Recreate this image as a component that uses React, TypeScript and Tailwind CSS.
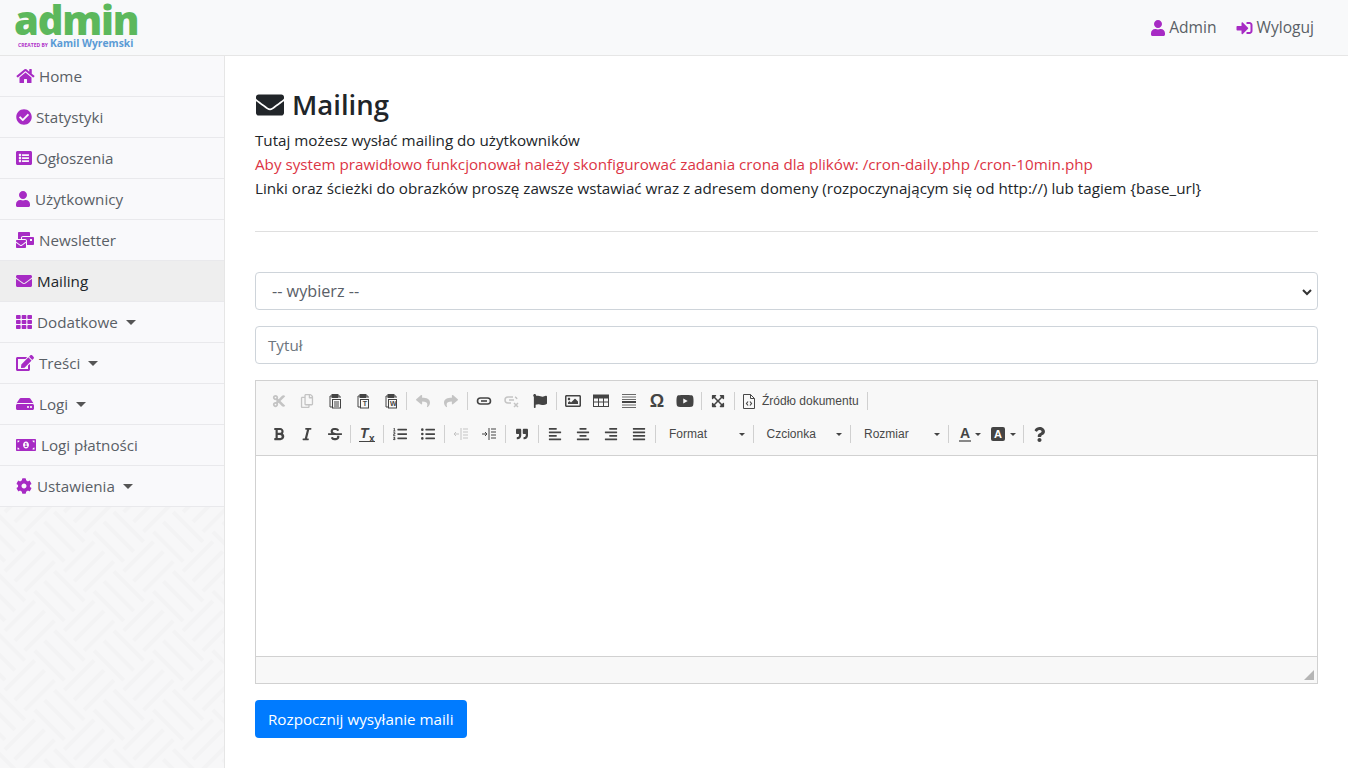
import type { ReactNode } from 'react';
import {
  FaHome, FaCheckCircle, FaListAlt, FaUser, FaMailBulk, FaEnvelope, FaTh, FaEdit, FaHdd,
  FaMoneyBillAlt, FaCog, FaSignInAlt, FaCut, FaRegCopy, FaReply, FaShare, FaFlag,
  FaRegImage, FaYoutube, FaExpandArrowsAlt, FaBold, FaItalic,
  FaStrikethrough, FaListOl, FaListUl, FaQuoteRight,
  FaAlignLeft, FaAlignCenter, FaAlignRight, FaAlignJustify, FaQuestion,
} from 'react-icons/fa';

const menu = [
  { label: 'Home', icon: <FaHome className="w-[19px] h-[16px]" />, gap: 'ml-[4px]' },
  { label: 'Statystyki', icon: <FaCheckCircle className="w-[16px] h-[16px]" />, gap: 'ml-[4px]' },
  { label: 'Ogłoszenia', icon: <FaListAlt className="w-[16px] h-[16px]" />, gap: 'ml-[4px]' },
  { label: 'Użytkownicy', icon: <FaUser className="w-[14px] h-[16px]" />, gap: 'ml-[5px]' },
  { label: 'Newsletter', icon: <FaMailBulk className="w-[18px] h-[16px]" />, gap: 'ml-[5px]' },
  { label: 'Mailing', icon: <FaEnvelope className="w-[16px] h-[16px]" />, gap: 'ml-[5px]', active: true },
  { label: 'Dodatkowe', icon: <FaTh className="w-[16px] h-[16px]" />, gap: 'ml-[5px]', caret: true },
  { label: 'Treści', icon: <FaEdit className="w-[18px] h-[16px]" />, gap: 'ml-[5px]', caret: true },
  { label: 'Logi', icon: <FaHdd className="w-[18px] h-[16px]" />, gap: 'ml-[5px]', caret: true },
  { label: 'Logi płatności', icon: <FaMoneyBillAlt className="w-[20px] h-[16px]" />, gap: 'ml-[5px]' },
  { label: 'Ustawienia', icon: <FaCog className="w-[16px] h-[16px]" />, gap: 'ml-[5px]', caret: true },
];

function Sep({ narrow }: { narrow?: boolean }) {
  return <span className={`w-px h-[18px] bg-[#d0d0d0] mr-[2px] ${narrow ? 'ml-[1px]' : 'ml-[2px]'}`} />;
}

function Tool({ children, off }: { children: ReactNode; off?: boolean }) {
  return (
    <span className={`w-[24px] h-[20px] mx-[2px] flex items-center justify-center text-[14px] ${off ? 'text-[#c4c4c4]' : 'text-[#444]'}`}>
      {children}
    </span>
  );
}

function Glyph({ children }: { children: ReactNode }) {
  return (
    <svg width="16" height="16" viewBox="0 0 16 16" fill="none" stroke="currentColor" strokeWidth="1" aria-hidden="true">
      {children}
    </svg>
  );
}

function PasteIcon({ mark }: { mark?: string }) {
  return (
    <span className="relative flex w-[16px] h-[16px] items-center justify-center">
      <Glyph>
        <path d="M5 3H3v11h2M11 3h2v2" />
        <rect x="5" y="1.5" width="6" height="3" fill="currentColor" />
        <rect x="5.5" y="6.5" width="8" height="8.5" />
        {!mark && <path d="M7 9h5M7 11h5M7 13h5" />}
      </Glyph>
      {mark && <span className="absolute left-[7px] top-[7px] w-[6px] text-center text-[7px] leading-[7px] font-bold font-['Liberation_Sans',sans-serif]">{mark}</span>}
    </span>
  );
}

function Combo({ label }: { label: string }) {
  return (
    <span className="w-[92.5px] h-[20px] pl-[11px] pr-[6px] flex items-center justify-between text-[12px] text-[#484848]">
      {label}
      <span className="border-x-[3px] border-x-transparent border-t-[3px] border-t-[#444]" />
    </span>
  );
}

export default function App() {
  return (
    <div className="min-h-[768px] bg-white text-[#212529] font-['Open_Sans','Noto_Sans',sans-serif] text-[15.2px] overflow-hidden">
      <header className="h-[56px] border-b border-[#e6e6e6] bg-[#f8f9fa] flex items-start pl-[14px] pr-[34px]">
        <div className="w-[125px] pt-[3px]">
          <div className="text-[40px] font-extrabold text-[#5cb85c] h-[34px] leading-[34px] tracking-[-1.2px]">admin</div>
          <div className="flex items-baseline gap-[2px] font-bold ml-[4px] h-[13px] leading-[13px]">
            <span className="text-[5px] text-[#b02fc9]">CREATED BY</span>
            <span className="text-[10.3px] text-[#5b9bd5]">Kamil Wyremski</span>
          </div>
        </div>
        <nav className="ml-auto h-[55px] pt-[1px] flex items-center gap-[19px] text-[15.6px] text-[#5a5f66]">
          <span className="flex items-center gap-[4px]"><FaUser className="w-[14px] h-[16px] text-[#a72bc4]" />Admin</span>
          <span className="flex items-center gap-[4px]"><FaSignInAlt className="w-[17px] h-[16px] text-[#a72bc4]" />Wyloguj</span>
        </nav>
      </header>
      <div className="flex h-[712px]">
        <aside className="w-[225px] border-r border-[#e6e6e6] bg-[#f7f7f8] flex flex-col">
          {menu.map(item => (
            <div
              key={item.label}
              className={`h-[41px] shrink-0 flex items-center pl-[16px] border-b border-[#e9e9ec] ${item.active ? 'bg-[#eeeeee] text-[#212529]' : 'bg-[#f9f9fb] text-[#5a5f66]'}`}
            >
              <span className="text-[#a72bc4] flex">{item.icon}</span>
              <span className={item.gap}>{item.label}</span>
              {item.caret && <span className="ml-[8px] border-x-[5px] border-x-transparent border-t-[5px] border-t-[#555]" />}
            </div>
          ))}
          <svg className="flex-1 w-full" aria-hidden="true">
            <defs>
              <pattern id="weave" width="84" height="84" patternUnits="userSpaceOnUse" patternTransform="rotate(45)">
                <path d="M0 7H42M0 21H42M0 35H42M42 49H84M42 63H84M42 77H84M49 0V42M63 0V42M77 0V42M7 42V84M21 42V84M35 42V84" fill="none" stroke="#f3f3f4" strokeWidth="4" />
              </pattern>
            </defs>
            <rect width="100%" height="100%" fill="url(#weave)" />
          </svg>
        </aside>
        <main className="flex-1 pl-[30px] pr-[30px]">
          <h2 className="flex items-center gap-[7px] mt-[28px] text-[27.5px] font-semibold leading-[42px]">
            <FaEnvelope className="w-[30px] h-[28px]" />Mailing
          </h2>
          <div className="mt-[2px] leading-[24px]">
            <p>Tutaj możesz wysłać mailing do użytkowników</p>
            <p className="text-[#dc3545]">Aby system prawidłowo funkcjonował należy skonfigurować zadania crona dla plików: /cron-daily.php /cron-10min.php</p>
            <p>Linki oraz ścieżki do obrazków proszę zawsze wstawiać wraz z adresem domeny (rozpoczynającym się od http://) lub tagiem {'{base_url}'}</p>
          </div>
          <hr className="mt-[31px] mb-[40px] border-[#dfdfdf]" />
          <div className="h-[38px] rounded-[4px] border border-[#ced4da] flex items-center justify-between pl-[16px] pr-[5px] pt-[1px] text-[16.2px] text-[#5a6068]">
            -- wybierz --
            <svg width="10" height="10" viewBox="0 0 10 10" aria-hidden="true"><path d="M1 3l4 4 4-4" fill="none" stroke="#333" strokeWidth="2" /></svg>
          </div>
          <div className="mt-[16px] h-[38px] rounded-[4px] border border-[#ced4da] flex items-center px-[12px] pt-[1px] text-[#6c757d]">Tytuł</div>
          <div className="mt-[16px] h-[304px] border border-[#d1d1d1] flex flex-col">
            <div className="h-[75px] bg-[#f8f8f8] border-b border-[#d1d1d1] pl-[9px] pt-[10px] flex flex-col gap-[13px]">
              <div className="flex items-center h-[20px]">
                <Tool off><FaCut /></Tool>
                <Tool off><FaRegCopy /></Tool>
                <Tool><PasteIcon /></Tool>
                <Tool><PasteIcon mark="T" /></Tool>
                <Tool><PasteIcon mark="W" /></Tool>
                <Sep narrow />
                <Tool off><FaReply /></Tool>
                <Tool off><FaShare /></Tool>
                <Sep />
                <Tool>
                  <Glyph>
                    <rect x="1.5" y="5" width="13" height="6" rx="3" strokeWidth="1.6" />
                    <path d="M5 8h6" strokeWidth="1.6" />
                  </Glyph>
                </Tool>
                <Tool off>
                  <Glyph>
                    <path d="M9 4H4a3 3 0 0 0 0 6h3M5 7h5M11 4a3 3 0 0 1 2 2" strokeWidth="1.5" />
                    <path d="M10 10l4 4M14 10l-4 4" strokeWidth="1.5" />
                  </Glyph>
                </Tool>
                <Tool><FaFlag /></Tool>
                <Sep />
                <Tool><FaRegImage className="text-[16px]" /></Tool>
                <Tool>
                  <Glyph>
                    <rect x="0.5" y="2.5" width="15" height="11" />
                    <rect x="0.5" y="2" width="15" height="3" fill="currentColor" />
                    <path d="M5.5 5v8M10.5 5v8M0.5 9h15" />
                  </Glyph>
                </Tool>
                <Tool>
                  <Glyph>
                    <path d="M1 1.5h14M1 4h14M1 6.5h14M1 12h14M1 14.5h14" strokeWidth="0.8" />
                    <path d="M1 9h14" strokeWidth="2" />
                  </Glyph>
                </Tool>
                <Tool><span className="text-[18px] leading-none font-bold font-['Liberation_Sans',sans-serif]">Ω</span></Tool>
                <Tool><FaYoutube className="text-[18px]" /></Tool>
                <Sep />
                <Tool><FaExpandArrowsAlt /></Tool>
                <Sep />
                <span className="flex items-center gap-[7px] mx-[6px] text-[12px] text-[#484848] font-['Liberation_Sans',sans-serif]">
                  <svg width="12" height="15" viewBox="0 0 12 15" fill="none" stroke="currentColor" aria-hidden="true">
                    <path d="M7.5 0.5H0.5v14h11V4.5zM7.5 0.5v4h4" />
                    <path d="M5 7.5L3.5 9.5L5 11.5M7 7.5L8.5 9.5L7 11.5" strokeWidth="1.2" />
                  </svg>
                  Źródło dokumentu
                </span>
                <Sep />
              </div>
              <div className="flex items-center h-[20px] font-['Liberation_Sans',sans-serif]">
                <Tool><FaBold /></Tool>
                <Tool><FaItalic /></Tool>
                <Tool><FaStrikethrough /></Tool>
                <Sep narrow />
                <Tool>
                  <span className="relative w-[16px] h-[16px] italic font-bold text-[14px] leading-[14px] border-b-[1.5px] border-[#444] pl-[1px]">
                    T
                    <span className="absolute left-[10px] top-[8px] not-italic text-[10px] leading-[10px]">x</span>
                  </span>
                </Tool>
                <Sep />
                <Tool><FaListOl /></Tool>
                <Tool><FaListUl /></Tool>
                <Sep />
                <Tool off>
                  <Glyph>
                    <path d="M8 2v12M10 3h5M10 6h5M10 9h5M10 12h5M1 8h5M3 6L1 8l2 2" />
                  </Glyph>
                </Tool>
                <Tool>
                  <Glyph>
                    <path d="M8 2v12M10 3h5M10 6h5M10 9h5M10 12h5M1 8h5M4 6l2 2-2 2" />
                  </Glyph>
                </Tool>
                <Sep />
                <Tool><FaQuoteRight className="text-[12px]" /></Tool>
                <Sep />
                <Tool><FaAlignLeft /></Tool>
                <Tool><FaAlignCenter /></Tool>
                <Tool><FaAlignRight /></Tool>
                <Tool><FaAlignJustify /></Tool>
                <Sep />
                <Combo label="Format" />
                <Sep />
                <Combo label="Czcionka" />
                <Sep />
                <Combo label="Rozmiar" />
                <Sep />
                <span className="w-[32px] h-[20px] ml-[5px] flex items-center text-[#444]">
                  <span className="w-[19px] flex justify-center">
                    <span className="text-[14px] font-bold border-b-2 border-[#888] leading-[14px] px-[1px]">A</span>
                  </span>
                  <span className="border-x-[3px] border-x-transparent border-t-[3px] border-t-[#444]" />
                </span>
                <span className="w-[32px] h-[20px] ml-[1px] flex items-center gap-[2px] text-[#444]">
                  <span className="w-[19px] flex justify-center">
                    <span className="bg-[#444] text-white text-[11px] font-bold px-[3.5px] rounded-[2px] leading-[14px]">A</span>
                  </span>
                  <span className="border-x-[3px] border-x-transparent border-t-[3px] border-t-[#444]" />
                </span>
                <Sep />
                <Tool><FaQuestion className="text-[15px]" /></Tool>
              </div>
            </div>
            <div className="flex-1 bg-white" />
            <div className="h-[27px] bg-[#f8f8f8] border-t border-[#d1d1d1] flex items-end justify-end p-[3px]">
              <svg width="10" height="10" viewBox="0 0 10 10" aria-hidden="true"><path d="M10 0v10H0z" fill="#b5b5b5" /></svg>
            </div>
          </div>
          <button className="mt-[16px] h-[38px] px-[13px] rounded-[4px] bg-[#007bff] text-white">Rozpocznij wysyłanie maili</button>
        </main>
      </div>
    </div>
  );
}
